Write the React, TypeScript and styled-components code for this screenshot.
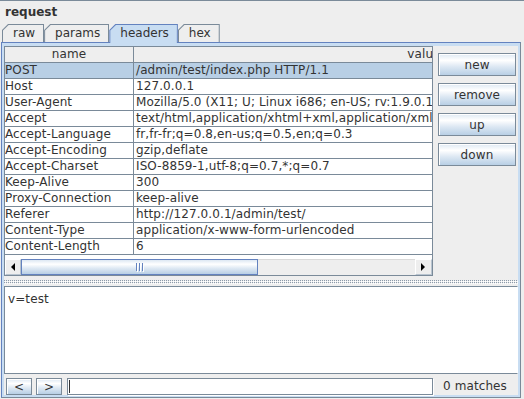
import React from 'react';
import styled, { createGlobalStyle } from 'styled-components';

const Global = createGlobalStyle`
  html, body { margin: 0; padding: 0; background: #eeeeee; }
  body {
    font-family: 'DejaVu Sans', 'Liberation Sans', sans-serif;
    font-size: 12px;
    letter-spacing: 0.1px;
    color: #333333;
  }
`;

const BTN_GRADIENT = 'linear-gradient(to bottom, #dde8f3 0%, #ffffff 30%, #dde8f3 60%, #b8cfe5 100%)';

const Frame = styled.div`
  width: 524px;
  height: 399px;
  box-sizing: border-box;
  border-top: 1px solid #7a8a99;
  background: #eeeeee;
  display: flex;
  flex-direction: column;
  overflow: hidden;
`;

const Title = styled.div`
  height: 23px;
  line-height: 22px;
  padding-left: 5px;
  font-weight: bold;
  letter-spacing: 0;
  color: #333333;
`;

const TabRow = styled.div`
  height: 18px;
  padding-left: 2px;
  display: flex;
  align-items: flex-end;
  gap: 0;
  position: relative;
  z-index: 1;
`;

const Tab = styled.div<{ $selected?: boolean }>`
  position: relative;
  box-sizing: border-box;
  height: ${p => (p.$selected ? '19px' : '18px')};
  margin-bottom: ${p => (p.$selected ? '-1px' : '0')};
  padding: 0 9px 0 11px;
  display: flex;
  align-items: flex-start;
  line-height: 18px;
  letter-spacing: 0;
  background: ${p => (p.$selected ? '#6382bf' : '#7a8a99')};
  clip-path: polygon(0 6px, 6px 0, 100% 0, 100% 100%, 0 100%);
  color: #333333;
  &::before {
    content: '';
    position: absolute;
    inset: 1px 1px 0 1px;
    background: ${p => (p.$selected ? '#c8ddf2' : '#eeeeee')};
    clip-path: polygon(0 5.6px, 5.6px 0, 100% 0, 100% 100%, 0 100%);
    z-index: -1;
  }
`;

const Content = styled.div`
  flex: 1;
  margin: 0 3px 1px 1px;
  border: 1px solid;
  border-color: #6382bf #7a8a99 #7a8a99 #6382bf;
  padding: 3px 2px 2px 2px;
  background: #c8ddf2;
  display: flex;
  min-height: 0;
`;

const Inner = styled.div`
  flex: 1;
  background: #eeeeee;
  display: flex;
  flex-direction: column;
  min-width: 0;
`;

const TopSection = styled.div`
  height: 231px;
  display: flex;
  flex-shrink: 0;
`;

const TablePane = styled.div`
  width: 429px;
  height: 230px;
  box-sizing: border-box;
  border: 1px solid #7a8a99;
  display: flex;
  flex-direction: column;
  background: #ffffff;
`;

const Viewport = styled.div`
  height: 211px;
  overflow: hidden;
  background: #ffffff;
`;

const Row = styled.div<{ $selected?: boolean; $header?: boolean }>`
  display: grid;
  grid-template-columns: 129px 580px;
  background: ${p => (p.$header ? '#eeeeee' : p.$selected ? '#b8cfe5' : '#ffffff')};
`;

const Cell = styled.div<{ $first?: boolean; $header?: boolean }>`
  box-sizing: border-box;
  height: 16px;
  line-height: 15px;
  border-bottom: 1px solid #7a8a99;
  border-right: ${p => (p.$first ? '1px solid #7a8a99' : '0')};
  padding: 0 ${p => (p.$first ? '0' : '2px')};
  white-space: nowrap;
  overflow: hidden;
  text-align: ${p => (p.$header ? 'center' : 'left')};
  color: #333333;
`;

const HScrollBar = styled.div`
  height: 17px;
  display: flex;
  background: #eeeeee;
  border-top: 1px solid #ffffff;
  box-sizing: border-box;
`;

const ArrowButton = styled.div<{ $w: number }>`
  width: ${p => p.$w}px;
  flex-shrink: 0;
  display: flex;
  align-items: center;
  justify-content: center;
  background: #eeeeee;
  box-sizing: border-box;
  border: 1px solid #ffffff;
  border-right-color: #b8c4d0;
  border-bottom-color: #b8c4d0;
`;

const Thumb = styled.div<{ $w: number }>`
  width: ${p => p.$w}px;
  flex-shrink: 0;
  box-sizing: border-box;
  border: 1px solid #6382bf;
  background: ${BTN_GRADIENT};
  display: flex;
  align-items: center;
  justify-content: center;
  gap: 1px;
`;

const Grip = styled.span`
  width: 1px;
  height: 8px;
  background: #6382bf;
  box-shadow: 1px 1px 0 #ffffff;
  margin-right: 1px;
`;

const Track = styled.div`
  flex: 1;
  background: #eeeeee;
  border-top: 1px solid #dadada;
`;

const ButtonColumn = styled.div`
  width: 78px;
  margin-left: 5px;
  padding-top: 7px;
  display: flex;
  flex-direction: column;
  gap: 7px;
`;

const Button = styled.div<{ $h?: number; $w?: number }>`
  height: ${p => p.$h ?? 23}px;
  width: ${p => (p.$w ? `${p.$w}px` : 'auto')};
  box-sizing: border-box;
  border: 1px solid #7a8a99;
  box-shadow: inset 1px 1px 0 #ffffff;
  background: ${BTN_GRADIENT};
  display: flex;
  align-items: center;
  justify-content: center;
  line-height: 14px;
  color: #333333;
  flex-shrink: 0;
`;

const Splitter = styled.div`
  height: 9px;
  flex-shrink: 0;
  display: flex;
  align-items: center;
`;

const Bumps = styled.div`
  flex: 1;
  height: 4px;
  background-image:
    radial-gradient(circle at 0.5px 0.5px, #8c9aaa 0.7px, transparent 0.8px),
    radial-gradient(circle at 0.5px 0.5px, #ffffff 0.7px, transparent 0.8px);
  background-size: 2px 2px, 2px 2px;
  background-position: 0 0, 1px 1px;
`;

const TextArea = styled.div`
  height: 88px;
  flex-shrink: 0;
  box-sizing: border-box;
  border: 1px solid #7a8a99;
  border-right-color: #ffffff;
  background: #ffffff;
  padding: 5px 3px;
  line-height: 15px;
  color: #333333;
`;

const SearchBar = styled.div`
  flex: 1;
  display: flex;
  align-items: flex-start;
  padding: 4px 0 0 2px;
  gap: 4px;
`;

const SearchField = styled.div`
  width: 366px;
  height: 17px;
  margin-left: 1px;
  box-sizing: border-box;
  border: 1px solid #7a8a99;
  box-shadow: 1px 1px 0 #ffffff;
  background: #ffffff;
  display: flex;
  align-items: center;
  padding-left: 1px;
`;

const Caret = styled.span`
  width: 1px;
  height: 13px;
  background: #333333;
`;

const Matches = styled.div`
  margin-left: 6px;
  line-height: 17px;
  color: #333333;
`;

const headers: [string, string][] = [
  ['POST', '/admin/test/index.php HTTP/1.1'],
  ['Host', '127.0.0.1'],
  ['User-Agent', 'Mozilla/5.0 (X11; U; Linux i686; en-US; rv:1.9.0.1) Gecko/2008072820 Firefox/3.0.1'],
  ['Accept', 'text/html,application/xhtml+xml,application/xml;q=0.9,*/*;q=0.8'],
  ['Accept-Language', 'fr,fr-fr;q=0.8,en-us;q=0.5,en;q=0.3'],
  ['Accept-Encoding', 'gzip,deflate'],
  ['Accept-Charset', 'ISO-8859-1,utf-8;q=0.7,*;q=0.7'],
  ['Keep-Alive', '300'],
  ['Proxy-Connection', 'keep-alive'],
  ['Referer', 'http://127.0.0.1/admin/test/'],
  ['Content-Type', 'application/x-www-form-urlencoded'],
  ['Content-Length', '6'],
];

const LeftArrow = () => (
  <svg width="5" height="8" viewBox="0 0 5 8"><polygon points="4,0 4,8 0,4" fill="#000" /></svg>
);
const RightArrow = () => (
  <svg width="5" height="8" viewBox="0 0 5 8"><polygon points="0,0 0,8 4,4" fill="#000" /></svg>
);

export default function App() {
  return (
    <Frame>
      <Global />
      <Title>request</Title>
      <TabRow>
        <Tab>raw</Tab>
        <Tab>params</Tab>
        <Tab $selected>headers</Tab>
        <Tab>hex</Tab>
      </TabRow>
      <Content>
        <Inner>
          <TopSection>
            <TablePane>
              <Viewport>
                <Row $header>
                  <Cell $first $header>name</Cell>
                  <Cell $header>value</Cell>
                </Row>
                {headers.map(([n, v], i) => (
                  <Row key={n} $selected={i === 0}>
                    <Cell $first>{n}</Cell>
                    <Cell>{v}</Cell>
                  </Row>
                ))}
              </Viewport>
              <HScrollBar>
                <ArrowButton $w={16}><LeftArrow /></ArrowButton>
                <Thumb $w={237}><Grip /><Grip /><Grip /></Thumb>
                <Track />
                <ArrowButton $w={17}><RightArrow /></ArrowButton>
              </HScrollBar>
            </TablePane>
            <ButtonColumn>
              <Button>new</Button>
              <Button>remove</Button>
              <Button>up</Button>
              <Button>down</Button>
            </ButtonColumn>
          </TopSection>
          <Splitter><Bumps /></Splitter>
          <TextArea>v=test</TextArea>
          <SearchBar>
            <Button $h={17} $w={26}>&lt;</Button>
            <Button $h={17} $w={26}>&gt;</Button>
            <SearchField><Caret /></SearchField>
            <Matches>0 matches</Matches>
          </SearchBar>
        </Inner>
      </Content>
    </Frame>
  );
}
